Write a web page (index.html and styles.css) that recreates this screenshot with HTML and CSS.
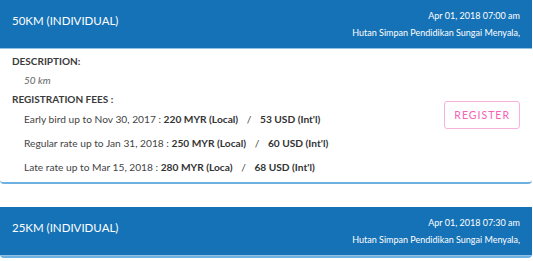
FILE: index.html
```html
<!DOCTYPE html>
<html lang="en">
<head>
    <meta charset="UTF-8">
    <title>Categories</title>
    <link rel="stylesheet" href="styles.css">
</head>
<body>
    <div class="category-list">
        <div class="category">
            <div class="category-header">
                <div class="category-title">50KM (INDIVIDUAL)</div>
                <div class="category-meta">
                    <div>Apr 01, 2018 07:00 am</div>
                    <div>Hutan Simpan Pendidikan Sungai Menyala,</div>
                </div>
            </div>
            <div class="category-body">
                <div class="category-info">
                    <div class="label">DESCRIPTION:</div>
                    <div class="description">50 km</div>
                    <div class="label">REGISTRATION FEES :</div>
                    <ul class="fees">
                        <li>Early bird up to Nov 30, 2017 : <strong>220 MYR (Local)</strong> <span class="sep">/</span> <strong>53 USD (Int'l)</strong></li>
                        <li>Regular rate up to Jan 31, 2018 : <strong>250 MYR (Local)</strong> <span class="sep">/</span> <strong>60 USD (Int'l)</strong></li>
                        <li>Late rate up to Mar 15, 2018 : <strong>280 MYR (Loca)</strong> <span class="sep">/</span> <strong>68 USD (Int'l)</strong></li>
                    </ul>
                </div>
                <button class="register-btn">REGISTER</button>
            </div>
        </div>

        <div class="category">
            <div class="category-header">
                <div class="category-title">25KM (INDIVIDUAL)</div>
                <div class="category-meta">
                    <div>Apr 01, 2018 07:30 am</div>
                    <div>Hutan Simpan Pendidikan Sungai Menyala,</div>
                </div>
            </div>
        </div>
    </div>
</body>
</html>
```

FILE: styles.css
```css
* {
    margin: 0;
    padding: 0;
    box-sizing: border-box;
}

body {
    background: #fff;
    font-family: 'Source Sans Pro', Lato, 'Open Sans', sans-serif;
    color: #333;
    overflow: hidden;
}

.category-list {
    width: 532px;
    display: flex;
    flex-direction: column;
    gap: 23px;
}

.category {
    border-bottom: 2px solid #6fb0e2;
    border-radius: 0 0 4px 4px;
}

.category-header {
    height: 49px;
    background: #1572b6;
    border-bottom: 1px solid #8fc0e6;
    color: #fff;
    display: flex;
    justify-content: space-between;
    align-items: flex-start;
    padding: 0 12px;
}

.category-title {
    font-size: 11.5px;
    line-height: 14px;
    padding-top: 14px;
}

.category-meta {
    font-size: 9px;
    text-align: right;
    line-height: 17px;
    padding-top: 7px;
}

.category-body {
    display: flex;
    justify-content: space-between;
    align-items: center;
    padding: 6px 12px 3px 12px;
}

.label {
    font-size: 10px;
    font-weight: bold;
    line-height: 12px;
    color: #3a3a3a;
}

.description {
    font-size: 10px;
    font-style: italic;
    color: #666;
    padding: 7px 12px 7px;
}

.fees {
    list-style: none;
    padding: 2px 0 0 12px;
}

.fees li {
    font-size: 10.2px;
    line-height: 24px;
    color: #444;
}

.fees strong {
    color: #333;
}

.sep {
    padding: 0 6px;
}

.register-btn {
    font-family: inherit;
    font-size: 10.5px;
    letter-spacing: 1px;
    color: #f562b6;
    background: #fff;
    border: 1px solid #f8b3dc;
    border-radius: 3px;
    padding: 7px 9px;
    margin-bottom: 5px;
}
```
